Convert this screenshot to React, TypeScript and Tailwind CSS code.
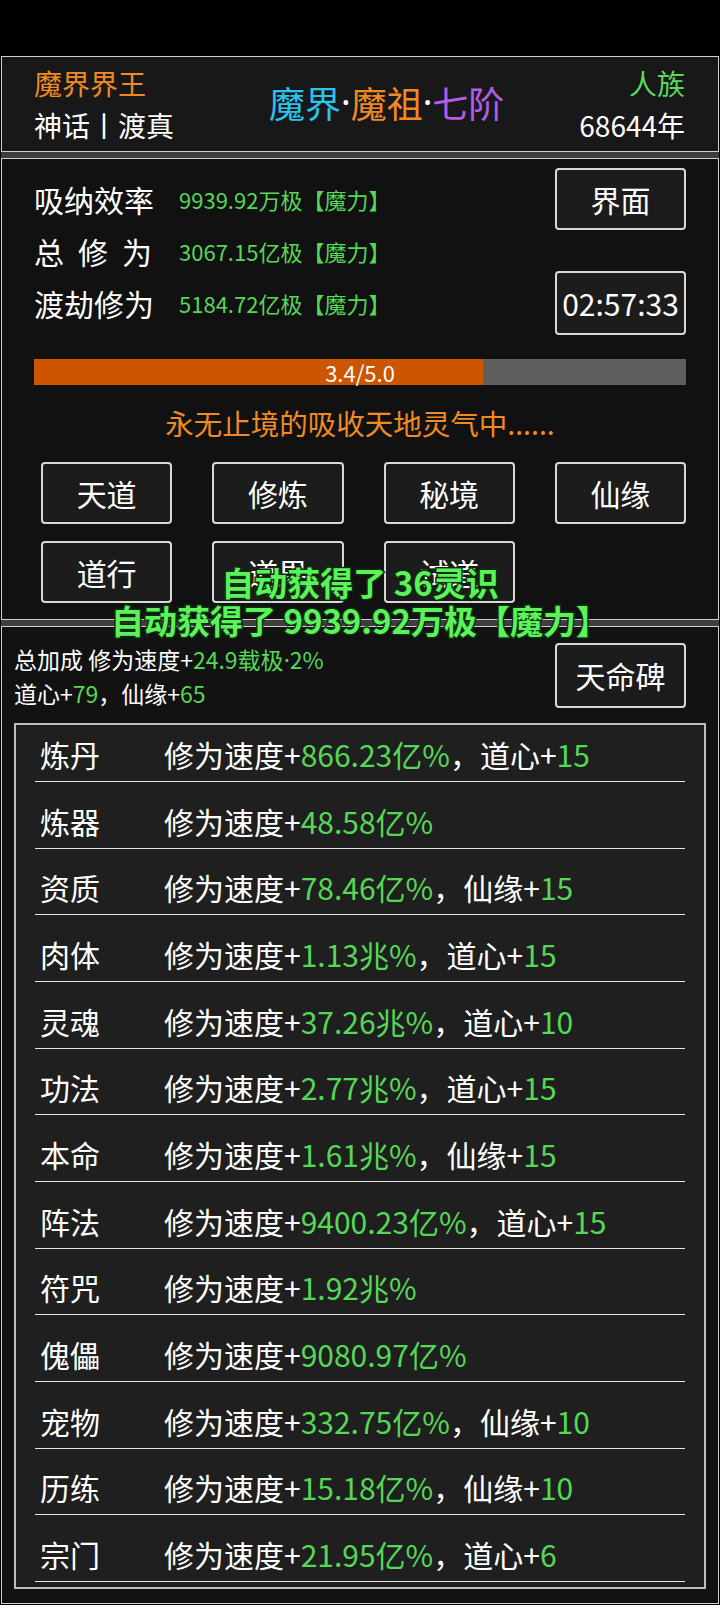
import React from 'react';

interface BonusRow {
  name: string;
  speed: string;
  extra?: { label: string; value: string };
}

const rows: BonusRow[] = [
  { name: '炼丹', speed: '866.23亿%', extra: { label: '道心', value: '15' } },
  { name: '炼器', speed: '48.58亿%' },
  { name: '资质', speed: '78.46亿%', extra: { label: '仙缘', value: '15' } },
  { name: '肉体', speed: '1.13兆%', extra: { label: '道心', value: '15' } },
  { name: '灵魂', speed: '37.26兆%', extra: { label: '道心', value: '10' } },
  { name: '功法', speed: '2.77兆%', extra: { label: '道心', value: '15' } },
  { name: '本命', speed: '1.61兆%', extra: { label: '仙缘', value: '15' } },
  { name: '阵法', speed: '9400.23亿%', extra: { label: '道心', value: '15' } },
  { name: '符咒', speed: '1.92兆%' },
  { name: '傀儡', speed: '9080.97亿%' },
  { name: '宠物', speed: '332.75亿%', extra: { label: '仙缘', value: '10' } },
  { name: '历练', speed: '15.18亿%', extra: { label: '仙缘', value: '10' } },
  { name: '宗门', speed: '21.95亿%', extra: { label: '道心', value: '6' } },
];

const stats = [
  { label: ['吸', '纳', '效', '率'], value: '9939.92万极【魔力】' },
  { label: ['总', '修', '为'], value: '3067.15亿极【魔力】' },
  { label: ['渡', '劫', '修', '为'], value: '5184.72亿极【魔力】' },
];

const menu = ['天道', '修炼', '秘境', '仙缘', '道行', '道果', '试道'];

const progress = 3.4 / 5;

const Btn = ({ children, className }: { children: React.ReactNode; className?: string }) => (
  <div
    className={`flex items-center justify-center rounded-[4px] border-2 border-[#d8d8d8] bg-[#1c1c1c] text-white ${className ?? ''}`}
  >
    {children}
  </div>
);

// 半角间隔点，用拉丁字体避免全角宽度
const Dot = ({ className }: { className?: string }) => (
  <span className={className} style={{ fontFamily: '"Noto Sans", sans-serif' }}>
    ·
  </span>
);

const App = () => {
  return (
    <div
      className="relative h-[1605px] w-[720px] overflow-hidden bg-black px-[1px] text-white"
      style={{ fontFamily: '"Noto Sans CJK SC", "Noto Sans", sans-serif' }}
    >
      <div className="h-[56px]" />

      {/* 头部：称号 / 境界 / 种族 */}
      <div className="flex h-[96px] border border-[#cfcfcf] bg-[#181818] pl-[32px] pr-[33px]">
        <div className="flex flex-col pt-[5px] text-[28px] leading-[42px]">
          <span className="text-[#f08a24]">魔界界王</span>
          <span>神话丨渡真</span>
        </div>
        <div className="flex flex-1 items-center justify-center pb-[4px] pl-[20px] text-[36px]">
          <span className="text-[#2cc3ee]">魔界</span>
          <Dot className="text-white" />
          <span className="text-[#f08a24]">魔祖</span>
          <Dot className="text-white" />
          <span className="text-[#b45ce8]">七阶</span>
        </div>
        <div className="flex flex-col items-end pt-[5px] text-[28px] leading-[42px]">
          <span className="text-[#5ad85a]">人族</span>
          <span>68644年</span>
        </div>
      </div>

      <div className="h-[6px] bg-[#3e3e3e]" />

      {/* 修为面板 */}
      <div className="h-[462px] border border-[#cfcfcf] bg-[#111111] px-[32px]">
        <div className="flex justify-between pt-[9px]">
          <div className="flex flex-col pt-[5px]">
            {stats.map((s) => (
              <div key={s.value} className="flex h-[52px] items-center">
                <div className="flex w-[118px] justify-between text-[30px]">
                  {s.label.map((c, i) => (
                    <span key={i}>{c}</span>
                  ))}
                </div>
                <span className="ml-[27px] text-[22px] text-[#55d855]">{s.value}</span>
              </div>
            ))}
          </div>
          <div className="flex flex-col">
            <Btn className="h-[62px] w-[131px] text-[30px]">界面</Btn>
            <Btn className="mt-[41px] h-[64px] w-[131px] text-[30px]">02:57:33</Btn>
          </div>
        </div>

        <div className="relative mt-[24px] h-[26px] bg-[#5f5f5f]">
          <div className="h-full bg-[#cc5500]" style={{ width: `${progress * 101.3}%` }} />
          <div className="absolute inset-0 flex items-center justify-center text-[22px] leading-none">
            3.4/5.0
          </div>
        </div>

        <div className="mt-[18px] h-[40px] text-center text-[28.5px] leading-[40px] text-[#f08a24]">
          永无止境的吸收天地灵气中......
        </div>

        <div className="mt-[19px] grid grid-cols-4 gap-x-[40px] gap-y-[17px] pl-[7px]">
          {menu.map((m) => (
            <Btn key={m} className="h-[62px] text-[30px]">
              {m}
            </Btn>
          ))}
        </div>
      </div>

      <div className="h-[6px] bg-[#3e3e3e]" />

      {/* 加成列表 */}
      <div className="h-[978px] border border-[#cfcfcf] bg-[#121212]">
        <div className="flex justify-between pl-[12px] pr-[32px] pt-[16px]">
          <div className="flex flex-col text-[23px] leading-[33px]">
            <span>
              总加成 修为速度+
              <span className="text-[#55d855]">
                24.9载极<Dot />2%
              </span>
            </span>
            <span>
              道心+<span className="text-[#55d855]">79</span>，仙缘+
              <span className="text-[#55d855]">65</span>
            </span>
          </div>
          <Btn className="h-[65px] w-[131px] text-[30px]">天命碑</Btn>
        </div>

        <div className="mx-[12px] mt-[13px] h-[866px] border-2 border-[#bdbdbd] bg-[#1f1f1f] px-[19px]">
          {rows.map((r, i) => (
            <div
              key={r.name}
              className={`flex items-end border-b border-[#e6e6e6] pb-[7px] text-[30px] leading-[40px] ${
                i === 0 ? 'h-[57px]' : 'h-[66.67px]'
              }`}
            >
              <span className="w-[129px] shrink-0 pl-[5px]">{r.name}</span>
              <span>
                修为速度+<span className="text-[#55d855]">{r.speed}</span>
                {r.extra && (
                  <>
                    ，{r.extra.label}+<span className="text-[#55d855]">{r.extra.value}</span>
                  </>
                )}
              </span>
            </div>
          ))}
        </div>
      </div>

      {/* 自动获得提示 */}
      <div className="absolute left-0 right-0 top-[563px] flex flex-col items-center text-[33px] font-bold leading-[38px] text-[#5cf25c] [-webkit-text-stroke:3px_#0d2e0d] [paint-order:stroke_fill]">
        <span>自动获得了 36灵识</span>
        <span>自动获得了 9939.92万极【魔力】</span>
      </div>
    </div>
  );
};

export default App;
